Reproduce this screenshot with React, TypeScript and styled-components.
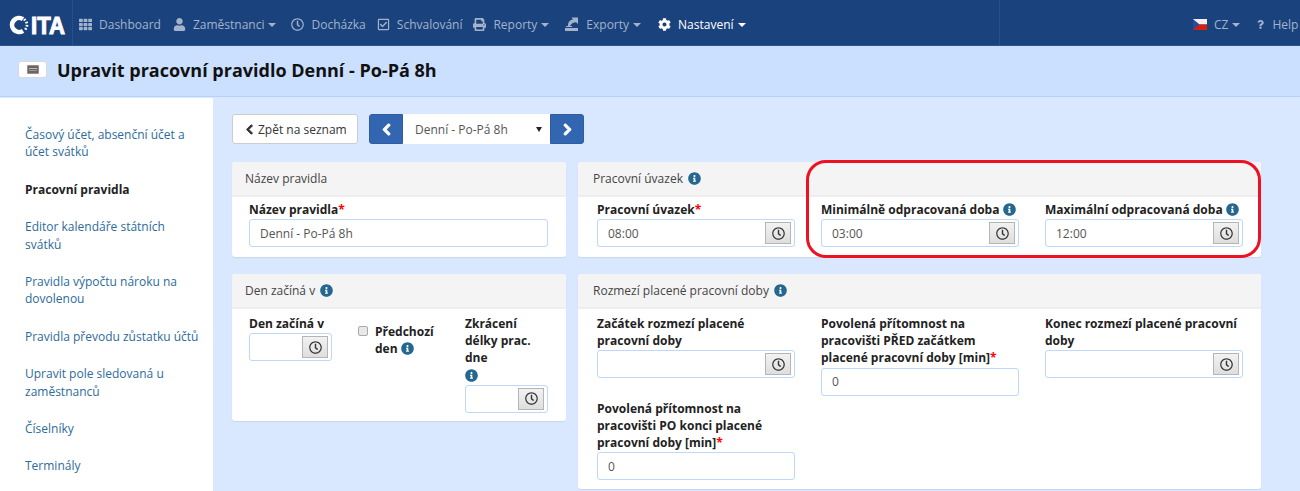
import React from "react";
import styled, { createGlobalStyle } from "styled-components";
import { FaTh, FaUser, FaRegClock, FaRegCheckSquare, FaPrint, FaCog, FaQuestion, FaInfoCircle, FaChevronLeft, FaChevronRight } from "react-icons/fa";

const Global = createGlobalStyle`
  html, body { margin: 0; padding: 0; height: 491px; overflow: hidden; background: #d9e8ff; }
  body { font-family: "Open Sans", "Liberation Sans", sans-serif; font-size: 12px; color: #333; }
  * { box-sizing: border-box; }
`;

const Page = styled.div`
  position: relative;
  width: 1300px;
  height: 491px;
  overflow: hidden;
`;

const Navbar = styled.nav`
  display: flex;
  align-items: stretch;
  height: 46px;
  background: #1a427c;
  border-bottom: 1px solid #2a5590;
`;

const Brand = styled.div`
  display: flex;
  align-items: center;
  width: 73px;
  padding: 4px 0 0 8px;
  border-right: 1px solid #25508c;
`;

const NavList = styled.div`
  display: flex;
  align-items: center;
  width: 927px;
  padding: 4px 0 0 6px;
  border-right: 1px solid #25508c;
`;

const NavItem = styled.a<{ $active?: boolean; $space?: number }>`
  display: flex;
  align-items: center;
  gap: 7px;
  margin-right: ${(p) => p.$space ?? 12}px;
  font-size: 12px;
  color: ${(p) => (p.$active ? "#fff" : "#a3b3cc")};
  white-space: nowrap;
`;

const Caret = styled.span`
  display: inline-block;
  margin-left: -3px;
  border-left: 4px solid transparent;
  border-right: 4px solid transparent;
  border-top: 4px solid currentColor;
`;

const NavRight = styled.div`
  display: flex;
  align-items: center;
  padding: 4px 0 0 193px;
`;

const Flag = styled.svg`
  display: block;
`;

const TitleBand = styled.header`
  display: flex;
  align-items: center;
  gap: 10px;
  height: 51px;
  padding: 0 0 3px 18px;
  background: #cbe0ff;
  border-bottom: 1px solid #b6d2fb;
`;

const TitleIcon = styled.span`
  display: flex;
  align-items: center;
  justify-content: center;
  width: 29px;
  height: 17px;
  background: #fff;
  border: 1px solid #d5d9e0;
  border-radius: 3px;
`;

const Title = styled.h1`
  margin: 0;
  font-size: 18px;
  font-weight: 700;
  color: #111;
`;

const Body = styled.div`
  display: flex;
  height: 394px;
`;

const Sidebar = styled.aside`
  width: 213px;
  margin-top: 1px;
  padding-top: 28px;
  background: #fff;
  flex: none;
`;

const SideItem = styled.a<{ $active?: boolean }>`
  display: block;
  width: 176px;
  margin: 0 0 20px 25px;
  font-size: 12px;
  line-height: 17.4px;
  font-weight: ${(p) => (p.$active ? 700 : 400)};
  color: ${(p) => (p.$active ? "#222" : "#2d6b9a")};
`;

const Main = styled.main`
  flex: 1;
  padding: 17px 39px 0 19px;
`;

const Toolbar = styled.div`
  display: flex;
  align-items: center;
  height: 30px;
  margin-bottom: 18px;
`;

const BackButton = styled.button`
  display: flex;
  align-items: center;
  gap: 3px;
  width: 126px;
  height: 30px;
  margin-right: 11px;
  padding: 0 0 0 11px;
  font: inherit;
  color: #333;
  background: #fff;
  border: 1px solid #ccc;
  border-radius: 3px;
`;

const Chevron = styled.span`
  display: flex;
  svg {
    stroke: currentColor;
    stroke-width: 45px;
  }
`;

const ArrowButton = styled.button<{ $side: "left" | "right" }>`
  display: flex;
  align-items: center;
  justify-content: center;
  width: 34px;
  height: 30px;
  padding: 0;
  color: #fff;
  background: #3366b0;
  border: 1px solid #2e5da3;
  border-radius: ${(p) => (p.$side === "left" ? "3px 0 0 3px" : "0 3px 3px 0")};
`;

const SelectBox = styled.div`
  display: flex;
  align-items: center;
  justify-content: space-between;
  width: 147px;
  height: 30px;
  padding: 0 8px 0 12px;
  color: #555;
  background: #fff;
`;

const SelectCaret = styled.span`
  border-left: 3.5px solid transparent;
  border-right: 3.5px solid transparent;
  border-top: 5px solid #222;
`;

const Columns = styled.div`
  display: grid;
  grid-template-columns: 334px 683px;
  grid-template-rows: 95px auto;
  column-gap: 12px;
  row-gap: 17px;
  align-items: start;
`;

const Panel = styled.section`
  background: #fff;
  border-radius: 3px;
  box-shadow: 0 1px 1px rgba(0, 0, 0, 0.08);
  overflow: hidden;
`;

const TopPanel = styled(Panel)`
  height: 95px;
`;

const PanelHead = styled.div<{ $pad?: number }>`
  display: flex;
  align-items: center;
  gap: 5px;
  height: 35px;
  padding: 0 0 0 ${(p) => p.$pad ?? 13}px;
  color: #444;
  background: #f4f4f4;
  border-bottom: 2px solid #eeeeee;
`;

const PanelGrid = styled.div<{ $cols: string; $gap: number; $top: number; $right: number; $left: number; $bottom?: number }>`
  display: grid;
  grid-template-columns: ${(p) => p.$cols};
  column-gap: ${(p) => p.$gap}px;
  row-gap: 4px;
  align-items: start;
  padding: ${(p) => p.$top}px ${(p) => p.$right}px ${(p) => p.$bottom ?? 8}px ${(p) => p.$left}px;
`;

const Field = styled.div`
  min-width: 0;
`;

const Label = styled.label`
  display: block;
  font-size: 12px;
  line-height: 17.2px;
  font-weight: 700;
  color: #222;
`;

const Req = styled.span`
  color: #f00;
`;

const InfoGlyph = styled(FaInfoCircle)`
  color: #24678f;
  vertical-align: -2px;
`;

const Input = styled.div`
  display: flex;
  align-items: center;
  justify-content: space-between;
  height: 28px;
  padding: 0 3px 0 10px;
  color: #555;
  background: #fff;
  border: 1px solid #bfd7f8;
  border-radius: 3px;
  margin-top: 1px;
`;

const ClockButton = styled.span`
  display: flex;
  align-items: center;
  justify-content: center;
  width: 26px;
  height: 22px;
  color: #333;
  background: linear-gradient(#f2f2f2, #dedede);
  border: 1px solid #b5b5b5;
`;

const CheckField = styled.div`
  display: flex;
  gap: 7px;
  padding-top: 8px;
`;

const CheckBox = styled.span`
  flex: none;
  width: 10px;
  height: 10px;
  margin-top: 3px;
  background: #e8e8e8;
  border: 1px solid #aaa;
  border-radius: 2px;
`;

const Highlight = styled.div`
  position: absolute;
  left: 806px;
  top: 160px;
  width: 455px;
  height: 98px;
  border: 3px solid #ee1122;
  border-radius: 20px;
  pointer-events: none;
`;

const Info = () => <InfoGlyph size={13} />;

const TimeInput = ({ value }: { value?: string }) => (
  <Input>
    <span>{value}</span>
    <ClockButton>
      <FaRegClock size={13} />
    </ClockButton>
  </Input>
);

const Logo = () => (
  <svg width="58" height="22" viewBox="0 0 58 22" aria-label="logo">
    <path d="M15 5.200 A7 7 0 1 0 15 16.800" fill="none" stroke="#fff" strokeWidth="4.6" />
    <path d="M15.600 6.600l2.200-1.800M17.300 9l2.600-.9M17.600 11.600l2.700.2M16.600 14.200l2.300 1.300" stroke="#fff" strokeWidth="1.700" fill="none" />
    <text x="23" y="20" fontFamily="Liberation Sans, sans-serif" fontWeight="700" fontSize="23" fill="#fff" stroke="#fff" strokeWidth="1" textLength="34" lengthAdjust="spacingAndGlyphs">ITA</text>
  </svg>
);

const ExportIcon = () => (
  <svg width="14" height="15" viewBox="0 0 14 15" fill="#a3b3cc">
    <path d="M0 11h13v3H0z" />
    <path d="M1 9h6v1H1z" />
    <path d="M3 8c0-3 2-5 5-5.400L6.500.5H13v6.500L11 5.200C8.500 5.500 6 6.500 5 9H3z" />
  </svg>
);

const CzFlag = () => (
  <Flag width="14" height="11" viewBox="0 0 14 11">
    <rect width="14" height="5.500" fill="#f0f0f5" />
    <rect y="5.500" width="14" height="5.500" fill="#d3200f" />
    <path d="M0 0l6.500 5.500L0 11z" fill="#2b4a9c" />
  </Flag>
);

const App = () => (
  <Page>
    <Global />
    <Navbar>
      <Brand>
        <Logo />
      </Brand>
      <NavList>
        <NavItem $space={12}><FaTh size={13} />Dashboard</NavItem>
        <NavItem $space={15}><FaUser size={13} />Zaměstnanci<Caret /></NavItem>
        <NavItem $space={11}><FaRegClock size={13} />Docházka</NavItem>
        <NavItem $space={11}><FaRegCheckSquare size={13} />Schvalování</NavItem>
        <NavItem $space={16}><FaPrint size={13} />Reporty<Caret /></NavItem>
        <NavItem $space={17}><ExportIcon />Exporty<Caret /></NavItem>
        <NavItem $active $space={0}><FaCog size={13} />Nastavení<Caret /></NavItem>
      </NavList>
      <NavRight>
        <NavItem $space={16}><CzFlag />CZ<Caret /></NavItem>
        <NavItem $space={0}><FaQuestion size={9} />Help</NavItem>
      </NavRight>
    </Navbar>
    <TitleBand>
      <TitleIcon>
        <svg width="12" height="9" viewBox="0 0 12 9">
          <rect width="12" height="9" rx="1" fill="#a88" />
          <rect x="1" y="1" width="10" height="7" fill="#666" />
          <rect x="2" y="3" width="8" height="1" fill="#bbb" />
          <rect x="2" y="5" width="8" height="1" fill="#999" />
        </svg>
      </TitleIcon>
      <Title>Upravit pracovní pravidlo Denní - Po-Pá 8h</Title>
    </TitleBand>
    <Body>
      <Sidebar>
        <SideItem>Časový účet, absenční účet a účet svátků</SideItem>
        <SideItem $active>Pracovní pravidla</SideItem>
        <SideItem>Editor kalendáře státních svátků</SideItem>
        <SideItem>Pravidla výpočtu nároku na dovolenou</SideItem>
        <SideItem>Pravidla převodu zůstatku účtů</SideItem>
        <SideItem>Upravit pole sledovaná u zaměstnanců</SideItem>
        <SideItem>Číselníky</SideItem>
        <SideItem>Terminály</SideItem>
      </Sidebar>
      <Main>
        <Toolbar>
          <BackButton><Chevron><FaChevronLeft size={11} /></Chevron>Zpět na seznam</BackButton>
          <ArrowButton $side="left"><Chevron><FaChevronLeft size={13} /></Chevron></ArrowButton>
          <SelectBox>Denní - Po-Pá 8h<SelectCaret /></SelectBox>
          <ArrowButton $side="right"><Chevron><FaChevronRight size={13} /></Chevron></ArrowButton>
        </Toolbar>
        <Columns>
          <TopPanel>
            <PanelHead>Název pravidla</PanelHead>
            <PanelGrid $cols="1fr" $gap={0} $top={4} $right={18} $left={17}>
              <Field>
                <Label>Název pravidla<Req>*</Req></Label>
                <Input>Denní - Po-Pá 8h</Input>
              </Field>
            </PanelGrid>
          </TopPanel>
          <TopPanel>
            <PanelHead $pad={15}>Pracovní úvazek <Info /></PanelHead>
            <PanelGrid $cols="198px 198px 198px" $gap={26} $top={4} $right={18} $left={19}>
              <Field>
                <Label>Pracovní úvazek<Req>*</Req></Label>
                <TimeInput value="08:00" />
              </Field>
              <Field>
                <Label>Minimálně odpracovaná doba <Info /></Label>
                <TimeInput value="03:00" />
              </Field>
              <Field>
                <Label>Maximální odpracovaná doba <Info /></Label>
                <TimeInput value="12:00" />
              </Field>
            </PanelGrid>
          </TopPanel>
          <Panel>
            <PanelHead>Den začíná v <Info /></PanelHead>
            <PanelGrid $cols="83px 81px 83px" $gap={26} $top={6} $right={18} $left={17}>
              <Field>
                <Label>Den začíná v</Label>
                <TimeInput />
              </Field>
              <CheckField>
                <CheckBox />
                <Label>Předchozí den <Info /></Label>
              </CheckField>
              <Field>
                <Label>Zkrácení délky prac. dne<br /><Info /></Label>
                <TimeInput />
              </Field>
            </PanelGrid>
          </Panel>
          <Panel>
            <PanelHead $pad={15}>Rozmezí placené pracovní doby <Info /></PanelHead>
            <PanelGrid $cols="198px 198px 198px" $gap={26} $top={6} $right={18} $left={19} $bottom={9}>
              <Field>
                <Label>Začátek rozmezí placené pracovní doby</Label>
                <TimeInput />
              </Field>
              <Field>
                <Label>Povolená přítomnost na pracovišti PŘED začátkem placené pracovní doby [min]<Req>*</Req></Label>
                <Input>0</Input>
              </Field>
              <Field>
                <Label>Konec rozmezí placené pracovní doby</Label>
                <TimeInput />
              </Field>
              <Field>
                <Label>Povolená přítomnost na pracovišti PO konci placené pracovní doby [min]<Req>*</Req></Label>
                <Input>0</Input>
              </Field>
            </PanelGrid>
          </Panel>
        </Columns>
      </Main>
    </Body>
    <Highlight />
  </Page>
);

export default App;
